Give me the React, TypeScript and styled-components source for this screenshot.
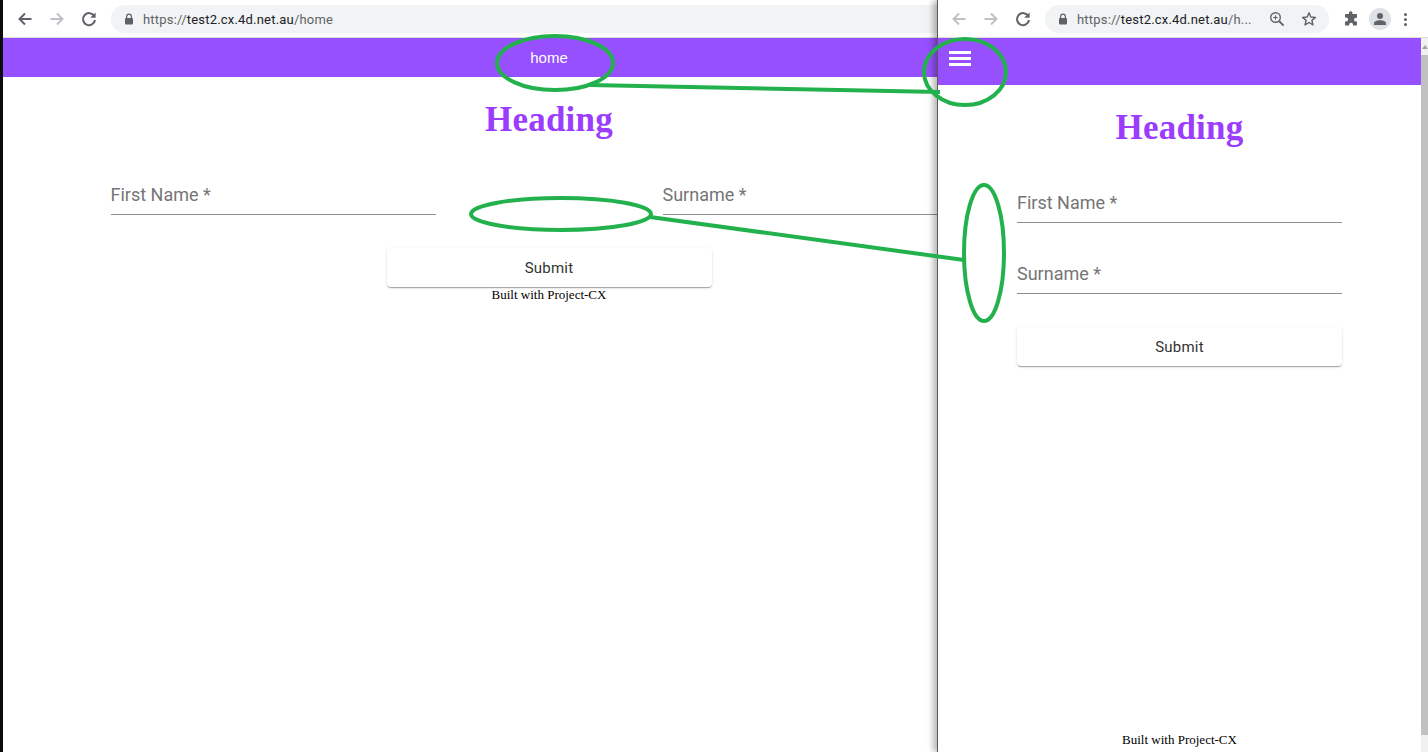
import React from "react";
import styled, { createGlobalStyle } from "styled-components";

const Global = createGlobalStyle`
  html, body { margin: 0; padding: 0; height: 100%; overflow: hidden; background: #fff; }
  #root { height: 100%; }
`;

const Desktop = styled.div`
  position: relative;
  display: flex;
  width: 1428px;
  height: 752px;
  overflow: hidden;
  background: #fff;
`;

const BackWindow = styled.section`
  flex: 0 0 934px;
  height: 752px;
  margin-left: 3px;
  overflow: hidden;
  position: relative;
`;

const LeftEdge = styled.div`
  flex: 0 0 3px;
  width: 3px;
  height: 752px;
  margin-right: -3px;
  background: #0b0b0b;
`;

const FrontWindow = styled.section`
  flex: 0 0 491px;
  height: 752px;
  display: flex;
  flex-direction: column;
  border-left: 1px solid #5a5a5a;
  box-shadow: -4px 0 6px rgba(0, 0, 0, 0.28);
  background: #fff;
  position: relative;
  z-index: 1;
`;

const Chrome = styled.div<{ $width?: number }>`
  display: flex;
  align-items: center;
  height: 37px;
  box-sizing: border-box;
  width: ${(p) => (p.$width ? `${p.$width}px` : "100%")};
  padding-top: 1px;
  background: #fff;
  border-bottom: 1px solid #dadce0;
  flex: none;
  height: 38px;
`;

const NavIcon = styled.svg<{ $left: number }>`
  width: 18px;
  height: 18px;
  margin-left: ${(p) => p.$left}px;
  flex: none;
`;

const Omnibox = styled.div<{ $width: number; $left: number }>`
  display: flex;
  align-items: center;
  width: ${(p) => p.$width}px;
  margin-left: ${(p) => p.$left}px;
  height: 28px;
  padding-left: 12px;
  box-sizing: border-box;
  border-radius: 14px;
  background: #f1f3f4;
  flex: none;
`;

const Lock = styled.svg`
  width: 12px;
  height: 12px;
  flex: none;
`;

const Url = styled.div`
  margin-left: 8px;
  font: 13px "Roboto", "Liberation Sans", sans-serif;
  letter-spacing: 0.2px;
  color: #5f6368;
  white-space: nowrap;
  b { font-weight: 400; color: #202124; }
`;

const OmniIcon = styled.svg<{ $left: number }>`
  width: 16px;
  height: 16px;
  margin-left: ${(p) => p.$left}px;
  flex: none;
`;

const Avatar = styled.div`
  width: 22px;
  height: 22px;
  margin-left: 10px;
  border-radius: 50%;
  background: #dee1e6;
  display: flex;
  align-items: center;
  justify-content: center;
  flex: none;
`;

const Dots = styled.div`
  margin-left: 13px;
  display: grid;
  gap: 2px;
  flex: none;
  i { display: block; width: 3px; height: 3px; background: #5f6368; border-radius: 50%; }
`;

const Page = styled.div<{ $width?: number }>`
  width: ${(p) => (p.$width ? `${p.$width}px` : "auto")};
  flex: 1;
  min-height: 0;
  display: flex;
  flex-direction: column;
  align-items: center;
`;

const AppBar = styled.header<{ $height: number }>`
  align-self: stretch;
  flex: none;
  height: ${(p) => p.$height}px;
  background: #9650ff;
  display: flex;
  justify-content: center;
  color: #fff;
`;

const NavLink = styled.a`
  margin-top: 11px;
  font: 15px/18px "Liberation Sans", Arial, sans-serif;
  color: #fff;
`;

const MenuButton = styled.button`
  align-self: flex-start;
  margin: 13px auto 0 11px;
  padding: 0;
  width: 22px;
  height: 18px;
  border: 0;
  background: none;
  display: grid;
  align-content: start;
  gap: 3px;
  i { display: block; height: 3px; background: #fff; }
`;

const Heading = styled.h1`
  margin: 23px 0 0;
  font: bold 35px/40px "Liberation Serif", "Times New Roman", serif;
  letter-spacing: 0.2px;
  color: #9b3cff;
  text-align: center;
`;

const FormRow = styled.div<{ $column?: boolean }>`
  display: flex;
  flex-direction: ${(p) => (p.$column ? "column" : "row")};
  gap: ${(p) => (p.$column ? "31px" : "227px")};
  margin-top: 35px;
`;

const Field = styled.div`
  width: 325px;
  height: 40px;
  box-sizing: border-box;
  border-bottom: 1px solid #8f8f8f;
  padding-top: 9px;
  font: 18px/22px "Roboto", "Liberation Sans", sans-serif;
  color: #757575;
`;

const SubmitButton = styled.button<{ $top: number }>`
  width: 325px;
  height: 39px;
  margin-top: ${(p) => p.$top}px;
  border: 0;
  border-radius: 4px;
  background: #fff;
  color: #333;
  font: 15px "Roboto", "Liberation Sans", sans-serif;
  letter-spacing: 0.2px;
  box-shadow: 0 2px 1px -1px rgba(0,0,0,.2), 0 1px 1px 0 rgba(0,0,0,.14), 0 1px 3px 0 rgba(0,0,0,.12);
`;

const Footer = styled.footer<{ $bottom: number }>`
  margin-top: auto;
  margin-bottom: ${(p) => p.$bottom}px;
  font: 13px/16px "Liberation Serif", "Times New Roman", serif;
  color: #000;
`;

const FrontBody = styled.div`
  flex: 1;
  min-height: 0;
  display: flex;
`;

const Scrollbar = styled.div`
  flex: 0 0 8px;
  background: #f1f1f1;
  display: flex;
  flex-direction: column;
  align-items: center;
  i { display: block; margin-top: 7px; width: 0; height: 0; border: 3px solid transparent; border-top: 0; border-bottom: 4px solid #a3a3a3; }
  u { display: block; margin-top: 6px; width: 100%; height: 680px; background: #c1c1c1; }
`;

const Annotations = styled.svg`
  position: absolute;
  left: 0;
  top: 0;
  pointer-events: none;
  z-index: 2;
`;

const Back = ({ disabled }: { disabled?: boolean }) => (
  <path d="M15.5 9H4M9 3.5 3.5 9 9 14.5" fill="none" stroke={disabled ? "#bdc1c6" : "#5f6368"} strokeWidth="2" />
);
const Forward = ({ disabled }: { disabled?: boolean }) => (
  <path d="M2.5 9H14M9 3.5 14.5 9 9 14.5" fill="none" stroke={disabled ? "#bdc1c6" : "#5f6368"} strokeWidth="2" />
);
const Reload = () => (
  <>
    <path d="M14.3 6.2A6 6 0 1 0 15 10" fill="none" stroke="#5f6368" strokeWidth="2" />
    <path d="M15.6 2.4v5.4h-5.4z" fill="#5f6368" />
  </>
);
const LockShape = () => (
  <Lock viewBox="0 0 12 12">
    <path d="M3.6 5V3.6a2.4 2.4 0 0 1 4.8 0V5" fill="none" stroke="#5f6368" strokeWidth="1.2" />
    <rect x="2" y="5" width="8" height="6.5" rx="1" fill="#5f6368" />
  </Lock>
);

export default function App() {
  return (
    <Desktop>
      <Global />
      <LeftEdge />
      <BackWindow>
        <Chrome $width={1092}>
          <NavIcon $left={13} viewBox="0 0 18 18"><Back /></NavIcon>
          <NavIcon $left={14} viewBox="0 0 18 18"><Forward disabled /></NavIcon>
          <NavIcon $left={14} viewBox="0 0 18 18"><Reload /></NavIcon>
          <Omnibox $width={900} $left={13}>
            <LockShape />
            <Url>https://<b>test2.cx.4d.net.au</b>/home</Url>
          </Omnibox>
        </Chrome>
        <Page $width={1092}>
          <AppBar $height={39}><NavLink>home</NavLink></AppBar>
          <Heading>Heading</Heading>
          <FormRow>
            <Field>First Name *</Field>
            <Field>Surname *</Field>
          </FormRow>
          <SubmitButton $top={33}>Submit</SubmitButton>
          <Footer $bottom={5}>Built with Project-CX</Footer>
        </Page>
      </BackWindow>
      <FrontWindow>
        <Chrome>
          <NavIcon $left={12} viewBox="0 0 18 18"><Back disabled /></NavIcon>
          <NavIcon $left={14} viewBox="0 0 18 18"><Forward disabled /></NavIcon>
          <NavIcon $left={14} viewBox="0 0 18 18"><Reload /></NavIcon>
          <Omnibox $width={284} $left={13}>
            <LockShape />
            <Url>https://<b>test2.cx.4d.net.au</b>/h...</Url>
            <OmniIcon $left={17} viewBox="0 0 16 16">
              <circle cx="6.5" cy="6.5" r="4.8" fill="none" stroke="#5f6368" strokeWidth="1.4" />
              <path d="M10 10l4.6 4.6" stroke="#5f6368" strokeWidth="1.8" />
              <path d="M6.5 4.2v4.6M4.2 6.5h4.6" stroke="#5f6368" strokeWidth="1.1" />
            </OmniIcon>
            <OmniIcon $left={16} viewBox="0 0 16 16">
              <path d="M8 1.8l1.8 4.2 4.6.4-3.5 3 1.1 4.5L8 11.5l-4 2.4 1.1-4.5-3.5-3 4.6-.4z" fill="none" stroke="#5f6368" strokeWidth="1.4" strokeLinejoin="round" />
            </OmniIcon>
          </Omnibox>
          <OmniIcon $left={14} viewBox="0 0 16 16">
            <path d="M6 1.5a1.8 1.8 0 0 1 3.4 0V3h3.8a.8.8 0 0 1 .8.8v3h-1a1.9 1.9 0 0 0 0 3.8h1v3.2a.8.8 0 0 1-.8.8H10v-1a1.9 1.9 0 0 0-3.8 0v1H2.800a.8.8 0 0 1-.8-.8v-3.400h1.200a1.900 1.900 0 0 0 0-3.800H2V3.800A.8.8 0 0 1 2.800 3H6z" fill="#5f6368" />
          </OmniIcon>
          <Avatar>
            <svg width="14" height="14" viewBox="0 0 14 14">
              <circle cx="7" cy="4" r="3" fill="#5f6368" />
              <path d="M1 13v-1.500C1 9.500 4 8.300 7 8.300s6 1.200 6 3.200V13z" fill="#5f6368" />
            </svg>
          </Avatar>
          <Dots><i /><i /><i /></Dots>
        </Chrome>
        <FrontBody>
          <Page>
            <AppBar $height={47}>
              <MenuButton aria-label="menu"><i /><i /><i /></MenuButton>
            </AppBar>
            <Heading>Heading</Heading>
            <FormRow $column>
              <Field>First Name *</Field>
              <Field>Surname *</Field>
            </FormRow>
            <SubmitButton $top={33}>Submit</SubmitButton>
            <Footer $bottom={4}>Built with Project-CX</Footer>
          </Page>
          <Scrollbar><i /><u /></Scrollbar>
        </FrontBody>
      </FrontWindow>
      <Annotations width="1428" height="752" viewBox="0 0 1428 752">
        <g fill="none" stroke="#22b14c" strokeWidth="4">
          <ellipse cx="555" cy="63" rx="58" ry="27" />
          <ellipse cx="965" cy="72" rx="41" ry="33" />
          <ellipse cx="561" cy="214" rx="90" ry="16" />
          <ellipse cx="984" cy="253" rx="20" ry="68" />
          <path d="M590 85 L940 92" />
          <path d="M650 217 L964 260" />
        </g>
      </Annotations>
    </Desktop>
  );
}
